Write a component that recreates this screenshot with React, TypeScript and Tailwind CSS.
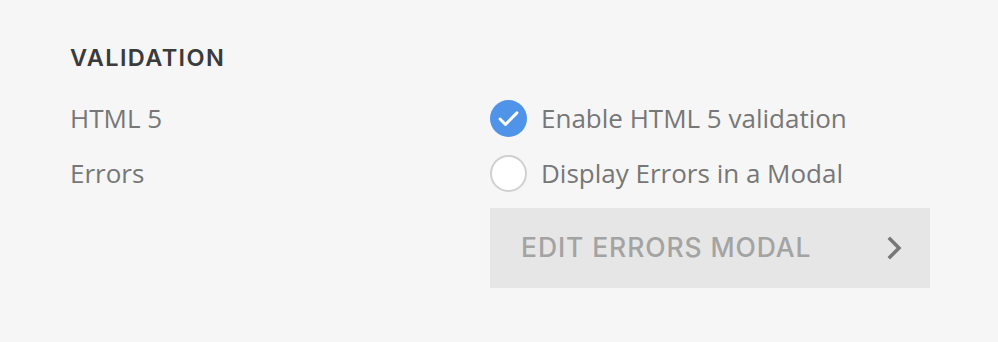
import React from "react";

export default function App() {
  return (
    <div className="w-[998px] h-[342px] bg-[#f6f6f6] pt-[42px] pl-[70px]">
      <div className="text-[23.5px] leading-[32px] font-semibold text-[#3b3b3b] tracking-[1.4px]" style={{ fontFamily: "Inter, sans-serif" }}>
        VALIDATION
      </div>
      <div className="mt-[26px] flex flex-col" style={{ fontFamily: "'Open Sans', sans-serif" }}>
        <div className="flex items-center h-[36px]">
          <div className="w-[420px] text-[26px] text-[#777]">HTML 5</div>
          <div className="flex items-center">
            <div className="w-[37px] h-[37px] rounded-full bg-[#4f94e8] flex items-center justify-center">
              <svg width="27" height="27" viewBox="0 0 24 24" fill="none" stroke="white" strokeWidth="2.6" strokeLinecap="round" strokeLinejoin="round">
                <path d="M4.5 12.5l4.8 4.8L19.5 7" />
              </svg>
            </div>
            <span className="ml-[14px] text-[26px] text-[#777]">Enable HTML 5 validation</span>
          </div>
        </div>
        <div className="flex items-center h-[36px] mt-[19px]">
          <div className="w-[420px] text-[26px] text-[#777]">Errors</div>
          <div className="flex items-center">
            <div className="w-[37px] h-[37px] rounded-full bg-white border-2 border-[#d0d0d0]" />
            <span className="ml-[14px] text-[26px] text-[#777]">Display Errors in a Modal</span>
          </div>
        </div>
        <div className="ml-[420px] mt-[17px] w-[440px] h-[80px] bg-[#e6e6e6] flex items-center justify-between pl-[31px] pr-[25px]">
          <span className="text-[26.5px] font-medium text-[#a3a3a3] tracking-[0.9px]" style={{ fontFamily: "Inter, sans-serif" }}>EDIT ERRORS MODAL</span>
          <svg width="20" height="26" viewBox="0 0 20 26" fill="none" stroke="#777" strokeWidth="3.5" strokeLinecap="square">
            <path d="M5 4l9 9-9 9" />
          </svg>
        </div>
      </div>
    </div>
  );
}
